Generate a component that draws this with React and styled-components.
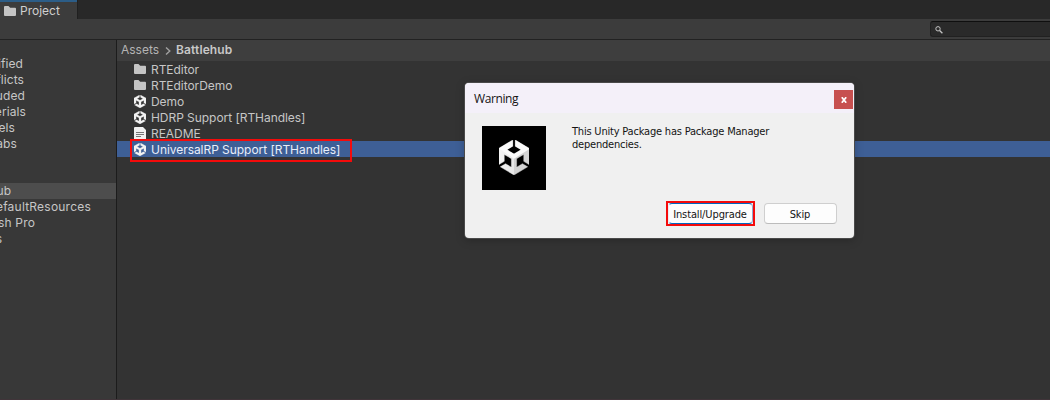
import React from "react";
import styled, { createGlobalStyle } from "styled-components";

const Global = createGlobalStyle`
  * { box-sizing: border-box; }
  body { margin: 0; overflow: hidden; background: #333; }
`;

const Window = styled.div`
  position: relative;
  width: 1050px;
  height: 400px;
  display: flex;
  flex-direction: column;
  overflow: hidden;
  background: #333333;
  color: #c6c6c6;
  font: 12px/16px Inter, "Liberation Sans", sans-serif;
  white-space: nowrap;
`;

const TabBar = styled.div`
  display: flex;
  height: 19px;
  flex: none;
  background: #282828;
`;

const Tab = styled.div`
  display: flex;
  align-items: center;
  gap: 4px;
  width: 77px;
  height: 19px;
  padding: 1px 0 0 4px;
  background: #3c3c3c;
  border-top: 2px solid #2c5d87;
  color: #d0d0d0;
  box-shadow: 1px 0 #202020;
`;

const Toolbar = styled.div`
  display: flex;
  justify-content: flex-end;
  height: 21px;
  flex: none;
  padding-top: 2px;
  background: #3c3c3c;
  border-bottom: 1px solid #222;
`;

const Search = styled.div`
  width: 120px;
  height: 16px;
  padding: 4px 0 0 4px;
  background: #2a2a2a;
  border: 1px solid #212121;
  border-top-color: #0f0f0f;
  border-right: 0;
  border-radius: 3px 0 0 3px;
  line-height: 0;
`;

const Body = styled.div`
  display: flex;
  flex: 1;
`;

const Sidebar = styled.div`
  width: 117px;
  flex: none;
  padding-top: 16px;
  background: #383838;
  border-right: 1px solid #1c1c1c;
  overflow: hidden;
`;

const TreeRow = styled.div`
  display: flex;
  justify-content: flex-end;
  height: 16px;
  padding-right: ${(p) => 116 - p.$end}px;
  background: ${(p) => (p.$selected ? "#4d4d4d" : "transparent")};
`;

const TreeGap = styled.div`
  height: ${(p) => p.$size}px;
`;

const Main = styled.div`
  flex: 1;
`;

const Breadcrumb = styled.div`
  display: flex;
  align-items: center;
  height: 21px;
  padding: 0 0 1px 4px;
  background: #3e3e3e;
  color: #b4b4b4;
`;

const Chevron = styled.svg`
  margin: 2px 5px 0 6px;
`;

const Current = styled.b`
  font-weight: 600;
  color: #c8c8c8;
  letter-spacing: 0.1px;
`;

const FileRow = styled.div`
  position: relative;
  display: flex;
  align-items: center;
  height: 16px;
  padding-left: 17px;
  background: ${(p) => (p.$selected ? "#3e5f96" : "transparent")};
  color: ${(p) => (p.$selected ? "#e8eefa" : "#c6c6c6")};
`;

const IconSlot = styled.span`
  display: flex;
  align-items: center;
  width: 17px;
  height: 14px;
  flex: none;
`;

const Label = styled.span`
  letter-spacing: ${(p) => p.$track || 0}px;
`;

const FileName = styled(Label)`
  padding-top: 2px;
`;

const RowHighlight = styled.div`
  position: absolute;
  left: 13px;
  top: -2px;
  width: 222px;
  height: 23px;
  border: 2px solid #f40b0b;
  z-index: 1;
`;

const Dialog = styled.div`
  position: absolute;
  left: 465px;
  top: 83px;
  width: 389px;
  height: 155px;
  display: flex;
  flex-direction: column;
  border-radius: 4px;
  overflow: hidden;
  background: #f0f0f0;
  color: #141414;
  box-shadow: 0 0 0 1px #4a4a4a, 0 2px 10px rgba(0, 0, 0, 0.25);
  z-index: 2;
`;

const DialogTitle = styled.div`
  display: flex;
  justify-content: space-between;
  height: 30px;
  padding: 7px 1px 0 9px;
  background: #f4f0f9;
  font: 12px/17px "Open Sans", "Noto Sans", sans-serif;
  letter-spacing: -0.4px;
`;

const Close = styled.button`
  display: flex;
  align-items: center;
  justify-content: center;
  width: 19px;
  height: 19px;
  padding: 0;
  border: 0;
  background: #c75050;
`;

const DialogContent = styled.div`
  display: flex;
  gap: 26px;
  height: 77px;
  padding: 13px 0 0 17px;
`;

const LogoTile = styled.div`
  display: flex;
  align-items: center;
  justify-content: center;
  width: 64px;
  height: 64px;
  padding-bottom: 1px;
  background: #000;
`;

const Message = styled.div`
  margin-top: -1px;
  font: 11px/13px "DejaVu Sans Condensed", "DejaVu Sans", sans-serif;
  letter-spacing: -0.2px;
`;

const Actions = styled.div`
  display: flex;
  justify-content: flex-end;
  gap: 9px;
  padding: 13px 17px 0 0;
`;

const ActionButton = styled.button`
  width: 73px;
  height: 21px;
  padding: 2px 1px 0 0;
  border: 1px solid #cfcfcf;
  border-bottom-color: #bcbcbc;
  border-radius: 4px;
  background: #fdfdfd;
  color: #141414;
  font: 11px/17px "DejaVu Sans Condensed", "DejaVu Sans", sans-serif;
  letter-spacing: -0.12px;
`;

const PrimaryFrame = styled.div`
  width: 89px;
  height: 25px;
  margin-top: -2px;
  border: 2px solid #f40b0b;
  background: #f0f0f0;
`;

const PrimaryButton = styled(ActionButton)`
  display: block;
  width: 85px;
  border-color: #0067c0;
  border-left-color: #e8eef5;
  border-right-color: #8fa9cf;
`;

const BottomLine = styled.div`
  height: 1px;
  flex: none;
  background: #403439;
`;

const FolderIcon = () => (
  <svg width="12" height="10" viewBox="0 0 12 10">
    <path d="M0 1Q0 0 1 0H4.5L6.2 1.8H11Q12 1.8 12 2.8V9Q12 10 11 10H1Q0 10 0 9Z" fill="#c4c4c4" />
  </svg>
);

const UNITY =
  "m12.9288 4.2939 3.7997 2.1929c.1366.077.1415.2905 0 .3675l-4.515 2.6076a.4192.4192 0 0 1-.4246 0L7.274 6.8543c-.139-.0745-.1415-.293 0-.3675l3.7972-2.193V0L1.3758 5.5977V16.793l3.7177-2.1456v-4.3858c-.0025-.1565.1813-.2682.318-.1838l4.5148 2.6076a.4252.4252 0 0 1 .2136.3676v5.2127c.0025.1565-.1813.2682-.3179.1838l-3.7996-2.1929-3.7178 2.1457L12 24l9.6954-5.5977-3.7178-2.1457-3.7996 2.1929c-.1341.082-.3229-.0248-.3179-.1838V13.053c0-.1565.087-.2956.2136-.3676l4.5149-2.6076c.134-.082.3228.0224.3179.1838v4.3858l3.7177 2.1456V5.5977L12.9288 0Z";

const UnityIcon = () => (
  <svg width="12" height="13" viewBox="1.37 0 21.26 24" preserveAspectRatio="none">
    <path d={UNITY} fill="#f2f2f2" stroke="#f2f2f2" strokeWidth="0.4" />
  </svg>
);

const UnityLogo = () => (
  <svg width="30" height="35" viewBox="1.37 0 21.26 24" preserveAspectRatio="none">
    <defs>
      <linearGradient id="face" x1="0" x2="1" y1="0" y2="0">
        <stop offset="0" stopColor="#f4f4f4" />
        <stop offset="0.49" stopColor="#e8e8e8" />
        <stop offset="0.51" stopColor="#d2d2d2" />
        <stop offset="1" stopColor="#d6d6d6" />
      </linearGradient>
      <clipPath id="top">
        <path d="M1 5.6 11.5 0H24V5.6L12 12.8Z" />
      </clipPath>
    </defs>
    <path d={UNITY} fill="url(#face)" stroke="url(#face)" strokeWidth="0.3" />
    <path d={UNITY} fill="#fafafa" clipPath="url(#top)" />
  </svg>
);

const DocIcon = () => (
  <svg width="12" height="13" viewBox="0 0 12 13">
    <path d="M1 0H9L12 3V12Q12 13 11 13H1Q0 13 0 12V1Q0 0 1 0Z" fill="#f0f0f0" />
    <path d="M2 5.5H10M2 7.5H10M2 9.5H7" stroke="#777" fill="none" />
  </svg>
);

const TREE = [
  { text: "Modified", end: 23, track: 0.1 },
  { text: "Conflicts", end: 24, track: 0.1 },
  { text: "Excluded", end: 25, track: 0.1 },
  { text: "Materials", end: 26, track: 0.1 },
  { text: "Models", end: 15, track: 0.1 },
  { text: "Prefabs", end: 17, track: 0.1 },
  { gap: 31 },
  { text: "Battlehub", end: 11, selected: true },
  { text: "DefaultResources", end: 91, track: 0.22 },
  { text: "TextMesh Pro", end: 35, track: 0.15 },
  { text: "Packages", end: 2 },
];

const FILES = [
  { name: "RTEditor", Icon: FolderIcon },
  { name: "RTEditorDemo", Icon: FolderIcon },
  { name: "Demo", Icon: UnityIcon },
  { name: "HDRP Support [RTHandles]", Icon: UnityIcon },
  { name: "README", Icon: DocIcon },
  { name: "UniversalRP Support [RTHandles]", Icon: UnityIcon, selected: true },
];

export default function App() {
  return (
    <Window>
      <Global />
      <TabBar>
        <Tab>
          <FolderIcon />
          <Label>Project</Label>
        </Tab>
      </TabBar>
      <Toolbar>
        <Search>
          <svg width="8" height="8" viewBox="0 0 8 8" fill="none" stroke="#c4c4c4">
            <circle cx="3" cy="2.8" r="2.2" />
            <path d="M4.6 4.5 7.4 7.3" strokeWidth="1.3" />
          </svg>
        </Search>
      </Toolbar>
      <Body>
        <Sidebar>
          {TREE.map((t, i) =>
            t.gap ? (
              <TreeGap key={i} $size={t.gap} />
            ) : (
              <TreeRow key={i} $end={t.end} $selected={t.selected}>
                <Label $track={t.track}>{t.text}</Label>
              </TreeRow>
            )
          )}
        </Sidebar>
        <Main>
          <Breadcrumb>
            <Label>Assets</Label>
            <Chevron width="6" height="8" viewBox="0 0 6 8" fill="none" stroke="#a0a0a0" strokeWidth="1.4">
              <path d="M1 .5 4.8 4 1 7.5" />
            </Chevron>
            <Current>Battlehub</Current>
          </Breadcrumb>
          {FILES.map(({ name, Icon, selected }) => (
            <FileRow key={name} $selected={selected}>
              <IconSlot>
                <Icon />
              </IconSlot>
              <FileName $track={-0.05}>{name}</FileName>
              {selected && <RowHighlight />}
            </FileRow>
          ))}
        </Main>
      </Body>
      <BottomLine />
      <Dialog>
        <DialogTitle>
          <span>Warning</span>
          <Close aria-label="Close">
            <svg width="6" height="6" viewBox="0 0 6 6" stroke="#fff" strokeWidth="1.8">
              <path d="M.8.3 5.2 5.7M5.2.3.8 5.7" />
            </svg>
          </Close>
        </DialogTitle>
        <DialogContent>
          <LogoTile>
            <UnityLogo />
          </LogoTile>
          <Message>
            This Unity Package has Package Manager
            <br />
            dependencies.
          </Message>
        </DialogContent>
        <Actions>
          <PrimaryFrame>
            <PrimaryButton>Install/Upgrade</PrimaryButton>
          </PrimaryFrame>
          <ActionButton>Skip</ActionButton>
        </Actions>
      </Dialog>
    </Window>
  );
}
